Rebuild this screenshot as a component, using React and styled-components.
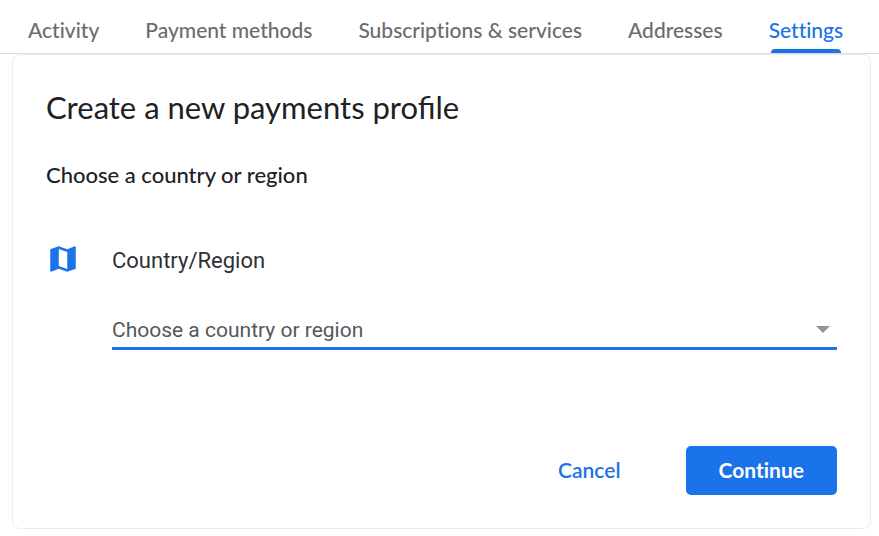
import React from 'react'
import styled, { createGlobalStyle } from 'styled-components'
import { MdMap } from 'react-icons/md'

const tabs = [
    { id: 'activity', name: 'Activity' },
    { id: 'methods', name: 'Payment methods' },
    { id: 'subscriptions', name: 'Subscriptions & services' },
    { id: 'addresses', name: 'Addresses' },
    { id: 'settings', name: 'Settings' },
]

const countries = ['Australia', 'Canada', 'Germany', 'India', 'United Kingdom', 'United States']

const App = () => {
    const [active, setActive] = React.useState('settings')
    const [country, setCountry] = React.useState('')
    return (
        <>
            <GlobalStyle />
            <Nav>
                {tabs.map(tab => (
                    <Tab
                        key={tab.id}
                        href={`#${tab.id}`}
                        $active={tab.id === active}
                        aria-current={tab.id === active ? 'page' : undefined}
                        onClick={() => setActive(tab.id)}
                    >
                        {tab.name}
                    </Tab>
                ))}
            </Nav>
            <Card>
                <Title>Create a new payments profile</Title>
                <Subtitle>Choose a country or region</Subtitle>
                <Field>
                    <MapIcon aria-hidden="true" />
                    <FieldBody>
                        <Label htmlFor="country">Country/Region</Label>
                        <SelectWrapper>
                            <Select
                                id="country"
                                value={country}
                                onChange={e => setCountry(e.target.value)}
                            >
                                <option value="" disabled>Choose a country or region</option>
                                {countries.map(name => (
                                    <option key={name} value={name}>{name}</option>
                                ))}
                            </Select>
                            <Arrow viewBox="0 0 14 7" aria-hidden="true">
                                <path d="M0 0h14L7 7z" />
                            </Arrow>
                        </SelectWrapper>
                    </FieldBody>
                </Field>
                <Actions>
                    <Button type="button">Cancel</Button>
                    <Button type="button" $primary>Continue</Button>
                </Actions>
            </Card>
        </>
    )
}

export default App

const GlobalStyle = createGlobalStyle`
    * {
        box-sizing: border-box;
    }
    body {
        margin: 0;
        background: #fff;
        font-family: Lato, "Open Sans", sans-serif;
        font-variant-ligatures: none;
        color: #202124;
    }
`

const Nav = styled.nav`
    display: flex;
    gap: 46px;
    height: 54px;
    padding: 0 28px;
    border-bottom: 1px solid #dadce0;
`

const Tab = styled.a`
    display: flex;
    align-items: center;
    position: relative;
    padding-top: 6px;
    font-size: 21px;
    font-weight: 500;
    line-height: 24px;
    white-space: nowrap;
    text-decoration: none;
    color: ${props => props.$active ? '#1a73e8' : '#6a6c70'};
    &::after {
        content: '';
        display: ${props => props.$active ? 'block' : 'none'};
        position: absolute;
        left: 2px;
        right: 2px;
        bottom: 0;
        height: 4px;
        border-radius: 4px 4px 0 0;
        background: #1a73e8;
    }
`

const Card = styled.main`
    margin: 0 8px 0 12px;
    padding: 30px 33px 33px;
    border: 1px solid #ececee;
    border-radius: 8px;
`

const Title = styled.h1`
    margin: 0;
    font-size: 31px;
    font-weight: 400;
    line-height: 44px;
    font-variant-ligatures: common-ligatures;
`

const Subtitle = styled.h2`
    margin: 32px 0 0;
    font-size: 22px;
    font-weight: 500;
    line-height: 28px;
`

const Field = styled.div`
    display: flex;
    gap: 32px;
    margin-top: 53px;
`

const MapIcon = styled(MdMap)`
    flex: none;
    width: 34px;
    height: 34px;
    color: #1a73e8;
`

const FieldBody = styled.div`
    flex: 1;
`

const Label = styled.label`
    display: block;
    font-family: Roboto, sans-serif;
    font-size: 22px;
    line-height: 38px;
    color: #2f3033;
`

const SelectWrapper = styled.div`
    display: flex;
    align-items: center;
    position: relative;
    margin-top: 32px;
    border-bottom: 3px solid #1a73e8;
`

const Select = styled.select`
    appearance: none;
    width: 100%;
    height: 35px;
    padding: 0;
    border: 0;
    outline: 0;
    background: transparent;
    font-family: Roboto, sans-serif;
    font-size: 21px;
    color: #55585c;
    cursor: pointer;
`

const Arrow = styled.svg`
    position: absolute;
    right: 7px;
    width: 14px;
    height: 7px;
    fill: #949494;
    pointer-events: none;
`

const Actions = styled.div`
    display: flex;
    justify-content: flex-end;
    gap: 32px;
    margin-top: 96px;
`

const Button = styled.button`
    height: 49px;
    padding: 0 33px 2px;
    border: 0;
    border-radius: 5px;
    background: ${props => props.$primary ? '#1a73e8' : 'transparent'};
    font-family: inherit;
    font-size: 21px;
    font-weight: ${props => props.$primary ? 700 : 600};
    font-variant-ligatures: none;
    line-height: 24px;
    color: ${props => props.$primary ? '#fff' : '#1a73e8'};
    cursor: pointer;
`
